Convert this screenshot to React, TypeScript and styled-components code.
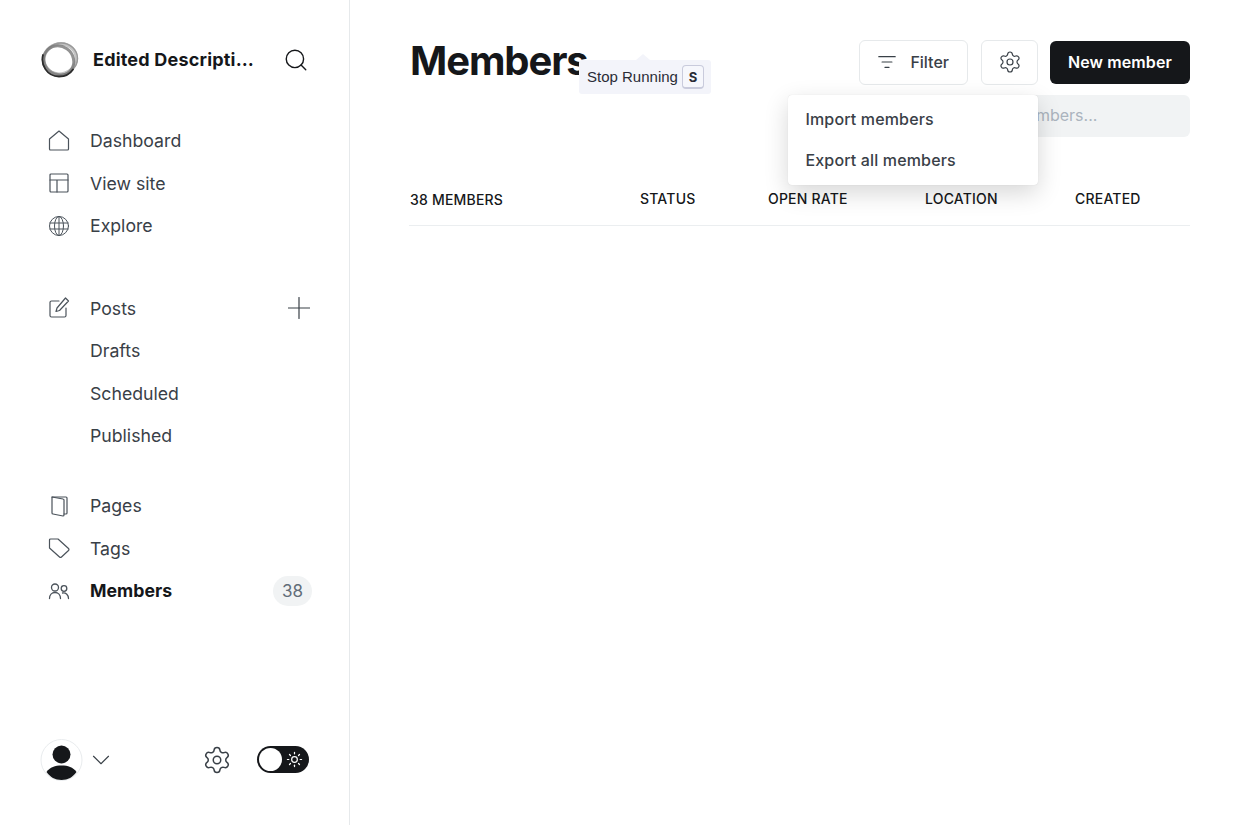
import { ReactNode } from "react"
import styled, { createGlobalStyle } from "styled-components"
import { ChevronDown, Search, Settings, Sun } from "lucide-react"

const GlobalStyle = createGlobalStyle`
  html, body { margin: 0; padding: 0; height: 100%; background: #fff; }
  body { font-family: Inter, "Liberation Sans", sans-serif; color: #15171a; }
  * { box-sizing: border-box; }
`

const Page = styled.div`
  display: flex;
  width: 1250px;
  height: 825px;
  overflow: hidden;
`

const Sidebar = styled.aside`
  width: 350px;
  flex: none;
  display: flex;
  flex-direction: column;
  padding: 40px 38px 44px 40px;
  border-right: 1px solid #e6e9eb;
`

const Brand = styled.div`
  display: flex;
  align-items: center;
  height: 40px;
  margin-bottom: 39.25px;
`

const BrandName = styled.span`
  margin-left: 13px;
  padding-bottom: 2px;
  width: 162px;
  font-size: 18px;
  font-weight: 700;
  letter-spacing: 0.2px;
  white-space: nowrap;
  overflow: hidden;
  text-overflow: ellipsis;
`

const SearchButton = styled.span`
  display: flex;
  margin-left: 28px;
  color: #15171a;
`

const NavGroup = styled.nav<{ $gap: number }>`
  display: flex;
  flex-direction: column;
  margin-bottom: ${p => p.$gap}px;
`

const NavRow = styled.div<{ $active?: boolean }>`
  display: flex;
  align-items: center;
  height: 42.5px;
  font-size: 17.7px;
  font-weight: ${p => (p.$active ? 700 : 400)};
  letter-spacing: ${p => (p.$active ? "0.05px" : "0")};
  color: ${p => (p.$active ? "#15171a" : "#394047")};
`

const NavIcon = styled.span`
  width: 38px;
  margin-left: 8px;
  margin-right: 4px;
  display: flex;
  align-items: center;
  color: #4b535b;
`

const NavLabel = styled.span`
  flex: 1;
`

const AddPost = styled.span`
  display: flex;
  margin-right: 1px;
  color: #394047;
`

const CountBadge = styled.span`
  width: 39px;
  height: 30px;
  margin-right: -1px;
  border-radius: 15px;
  background: #f1f3f4;
  display: flex;
  align-items: center;
  justify-content: center;
  font-size: 17px;
  font-weight: 400;
  letter-spacing: 0;
  color: #626d79;
`

const Footer = styled.footer`
  margin-top: auto;
  display: flex;
  align-items: center;
  height: 42px;
`

const Avatar = styled.span`
  width: 43px;
  height: 42px;
  display: flex;
`

const Chevron = styled.span`
  display: flex;
  margin-left: 2.5px;
  color: #394047;
`

const FooterGear = styled.span`
  display: flex;
  margin-left: 86.5px;
  color: #394047;
`

const Toggle = styled.span`
  width: 52px;
  height: 27px;
  margin-left: 25px;
  margin-top: -1px;
  border-radius: 14px;
  background: #15171a;
  display: flex;
  align-items: center;
  padding: 0 6px 0 2px;
  justify-content: space-between;
  color: #fff;
`

const Knob = styled.span`
  width: 23px;
  height: 23px;
  border-radius: 50%;
  background: #fff;
`

const Main = styled.main`
  flex: 1;
  padding: 40px 60px 0;
  display: flex;
  flex-direction: column;
`

const HeaderRow = styled.header`
  display: flex;
  align-items: center;
  height: 45px;
`

const TitleWrap = styled.div`
  position: relative;
  margin-right: auto;
`

const Title = styled.h1`
  margin: -2px 0 2px;
  font-size: 40px;
  line-height: 45px;
  font-weight: 700;
  letter-spacing: -1.1px;
  color: #15171a;
`

const Tooltip = styled.div`
  position: absolute;
  left: 169px;
  top: 20px;
  height: 34px;
  width: 132px;
  display: flex;
  align-items: center;
  gap: 4px;
  padding: 0 0 2px 8px;
  background: #f3f4fa;
  border-radius: 3px;
  font-family: "Liberation Sans", Arial, sans-serif;
  font-size: 15px;
  color: #2a2c36;
  white-space: nowrap;
  &::before {
    content: "";
    position: absolute;
    left: 57px;
    top: -6px;
    border-left: 7px solid transparent;
    border-right: 7px solid transparent;
    border-bottom: 6px solid #f3f4fa;
  }
`

const Kbd = styled.kbd`
  width: 22px;
  height: 24px;
  margin-top: 2px;
  border: 1px solid #c9cbdc;
  border-bottom-width: 2px;
  border-radius: 4px;
  background: #f6f7fc;
  display: flex;
  align-items: center;
  justify-content: center;
  font-family: Inter, sans-serif;
  font-size: 13px;
  font-weight: 700;
`

const Actions = styled.div`
  display: flex;
  align-items: center;
  gap: 12px;
`

const OutlineButton = styled.button`
  height: 45px;
  padding: 0 18px 2px;
  margin-right: 1px;
  display: flex;
  align-items: center;
  gap: 14px;
  background: #fff;
  border: 1px solid #e6e9eb;
  border-radius: 6px;
  font-family: inherit;
  font-size: 16px;
  font-weight: 500;
  color: #394047;
`

const GearWrap = styled.div`
  position: relative;
  display: flex;
`

const GearButton = styled(OutlineButton)`
  width: 57px;
  margin-right: 0;
  padding: 0 0 2px;
  justify-content: center;
`

const PrimaryButton = styled.button`
  height: 43px;
  width: 140px;
  padding: 0 0 2px;
  background: #15171a;
  border: 0;
  border-radius: 6px;
  font-family: inherit;
  font-size: 16px;
  font-weight: 600;
  letter-spacing: 0.1px;
  color: #fff;
`

const Dropdown = styled.ul`
  position: absolute;
  right: 0;
  top: 55px;
  z-index: 2;
  width: 250px;
  height: 90px;
  margin: 0;
  padding: 4px 0 5px;
  list-style: none;
  display: flex;
  flex-direction: column;
  background: #fff;
  border-radius: 4px;
  box-shadow: 0 0 1px rgba(0, 0, 0, 0.15), 0 8px 24px rgba(0, 0, 0, 0.16);
`

const DropdownItem = styled.li`
  flex: 1;
  display: flex;
  align-items: center;
  padding-left: 17.5px;
  font-size: 16px;
  font-weight: 500;
  letter-spacing: 0.15px;
  color: #394047;
`

const SearchRow = styled.div`
  display: flex;
  justify-content: flex-end;
  margin-top: 10px;
`

const SearchInput = styled.input`
  width: 250px;
  height: 42px;
  padding: 0 0 2px 15px;
  border: 0;
  border-radius: 6px;
  background: #f1f3f4;
  font-family: inherit;
  font-size: 16px;
  &::placeholder { color: #abb4be; opacity: 1; }
`

const TableHead = styled.div`
  display: grid;
  grid-template-columns: 230px 128px 157px 150px 1fr;
  align-items: center;
  height: 89px;
  margin-left: -1px;
  padding: 36px 0 0 1px;
  border-bottom: 1px solid #ebeef0;
`

const HeadCell = styled.span<{ $lead?: boolean }>`
  font-size: 14px;
  font-weight: 450;
  letter-spacing: 0.2px;
  color: #15171a;
  padding-top: ${p => (p.$lead ? "2px" : "0")};
  margin-top: -2px;
`

const Line = (props: { size?: number; children: ReactNode; width?: number }) => (
  <svg
    width={props.size ?? 22}
    height={props.size ?? 22}
    viewBox="0 0 22 22"
    fill="none"
    stroke="currentColor"
    strokeWidth={props.width ?? 1.2}
    strokeLinecap="round"
    strokeLinejoin="round"
  >
    {props.children}
  </svg>
)

const Logo = () => (
  <svg width="40" height="38" viewBox="0 0 40 38" fill="none">
    <ellipse cx="20" cy="18" rx="16.500" ry="15" stroke="#c4c4c4" strokeWidth="3.500" transform="rotate(-20 20 18)" />
    <ellipse cx="21" cy="17.500" rx="16.500" ry="15.500" stroke="#999" strokeWidth="1.400" />
    <ellipse cx="18.500" cy="20" rx="15.500" ry="14.500" stroke="#777" strokeWidth="3" opacity=".8" transform="rotate(35 19 20)" />
    <path d="M3 14c-2.500 9 3.500 21.500 16 21.500 6 0 11-2.500 14-7" stroke="#2c2c2c" strokeWidth="1.800" strokeLinecap="round" />
  </svg>
)

const HomeIcon = () => (
  <Line>
    <path d="M1.500 9 11 1l9.500 8v10a1 1 0 0 1-1 1h-17a1 1 0 0 1-1-1z" />
  </Line>
)

const LayoutIcon = () => (
  <Line>
    <rect x="2" y="2" width="18" height="18" rx="1" />
    <path d="M2 8h18M9 8v12" />
  </Line>
)

const GlobeIcon = () => (
  <Line width={1}>
    <circle cx="11" cy="11" r="9.500" />
    <ellipse cx="11" cy="11" rx="4.500" ry="9.500" />
    <path d="M2 8h18M2 14h18M11 1.500v19" />
  </Line>
)

const PostIcon = () => (
  <Line>
    <path d="M11 4H3.500a1.500 1.500 0 0 0-1.500 1.500V18.500A1.500 1.500 0 0 0 3.500 20H16.500a1.500 1.500 0 0 0 1.500-1.500V11" />
    <path d="M17.500 1 20.500 4 11.500 13.500 8 14.500 9 11z" />
  </Line>
)

const PagesIcon = () => (
  <Line>
    <path d="M4 2h14a1 1 0 0 1 1 1v15a1 1 0 0 1-1 1h-2" />
    <path d="M4 2l11 2a1 1 0 0 1 1 1v15a1 1 0 0 1-1 1L5 19a1 1 0 0 1-1-1z" />
  </Line>
)

const TagIcon = () => (
  <Line>
    <path d="M1.500 3a1 1 0 0 1 1-1h7.500L20.500 11.500a1.500 1.500 0 0 1 0 2L13.500 20a1.500 1.500 0 0 1-2 0L1.500 11z" />
  </Line>
)

const MembersIcon = () => (
  <Line width={1.3}>
    <circle cx="7" cy="7.500" r="3.500" />
    <path d="M1.500 18.500c0-3.500 2.300-6 5.500-6s5.500 2.500 5.500 6" />
    <circle cx="16" cy="8.500" r="2.800" />
    <path d="M14.500 13c3.500-.5 6 2 6 5.500" />
  </Line>
)

const FilterIcon = () => (
  <Line size={18} width={1.5}>
    <path d="M1 4.500h20M5 11h12M8.500 17.500h5" />
  </Line>
)

const PlusIcon = () => (
  <Line width={1.2}>
    <path d="M.5 11h21M11 .5v21" />
  </Line>
)

const AvatarArt = () => (
  <svg width="43" height="42" viewBox="0 0 43 42">
    <circle cx="21.500" cy="21" r="20.500" fill="#fff" stroke="#e9ecee" />
    <circle cx="21.500" cy="15.500" r="9" fill="#15171a" />
    <path d="M6.500 33C10 28 15 26.500 21.500 26.500S33 28 36.500 33C33 38 28 41 21.500 41S10 38 6.500 33z" fill="#15171a" />
  </svg>
)

const PRIMARY_NAV = [
  { label: "Dashboard", icon: <HomeIcon /> },
  { label: "View site", icon: <LayoutIcon /> },
  { label: "Explore", icon: <GlobeIcon /> },
]

const App = () => (
  <Page>
    <GlobalStyle />
    <Sidebar>
      <Brand>
        <Logo />
        <BrandName>Edited Description Site</BrandName>
        <SearchButton>
          <Search size={26} strokeWidth={1.3} />
        </SearchButton>
      </Brand>

      <NavGroup $gap={40}>
        {PRIMARY_NAV.map(item => (
          <NavRow key={item.label}>
            <NavIcon>{item.icon}</NavIcon>
            <NavLabel>{item.label}</NavLabel>
          </NavRow>
        ))}
      </NavGroup>

      <NavGroup $gap={27.5}>
        <NavRow>
          <NavIcon><PostIcon /></NavIcon>
          <NavLabel>Posts</NavLabel>
          <AddPost><PlusIcon /></AddPost>
        </NavRow>
        {["Drafts", "Scheduled", "Published"].map(label => (
          <NavRow key={label}>
            <NavIcon />
            <NavLabel>{label}</NavLabel>
          </NavRow>
        ))}
      </NavGroup>

      <NavGroup $gap={0}>
        <NavRow>
          <NavIcon><PagesIcon /></NavIcon>
          <NavLabel>Pages</NavLabel>
        </NavRow>
        <NavRow>
          <NavIcon><TagIcon /></NavIcon>
          <NavLabel>Tags</NavLabel>
        </NavRow>
        <NavRow $active>
          <NavIcon><MembersIcon /></NavIcon>
          <NavLabel>Members</NavLabel>
          <CountBadge>38</CountBadge>
        </NavRow>
      </NavGroup>

      <Footer>
        <Avatar><AvatarArt /></Avatar>
        <Chevron><ChevronDown size={30} strokeWidth={0.9} /></Chevron>
        <FooterGear><Settings size={30} strokeWidth={1.2} /></FooterGear>
        <Toggle>
          <Knob />
          <Sun size={17} strokeWidth={1.7} />
        </Toggle>
      </Footer>
    </Sidebar>

    <Main>
      <HeaderRow>
        <TitleWrap>
          <Title>Members</Title>
          <Tooltip>
            Stop Running
            <Kbd>S</Kbd>
          </Tooltip>
        </TitleWrap>
        <Actions>
          <OutlineButton><FilterIcon />Filter</OutlineButton>
          <GearWrap>
            <GearButton><Settings size={24} strokeWidth={1.2} /></GearButton>
            <Dropdown>
              <DropdownItem>Import members</DropdownItem>
              <DropdownItem>Export all members</DropdownItem>
            </Dropdown>
          </GearWrap>
          <PrimaryButton>New member</PrimaryButton>
        </Actions>
      </HeaderRow>

      <SearchRow>
        <SearchInput placeholder="Search members..." readOnly />
      </SearchRow>

      <TableHead>
        <HeadCell $lead>38 MEMBERS</HeadCell>
        <HeadCell>STATUS</HeadCell>
        <HeadCell>OPEN RATE</HeadCell>
        <HeadCell>LOCATION</HeadCell>
        <HeadCell>CREATED</HeadCell>
      </TableHead>
    </Main>
  </Page>
)

export default App
